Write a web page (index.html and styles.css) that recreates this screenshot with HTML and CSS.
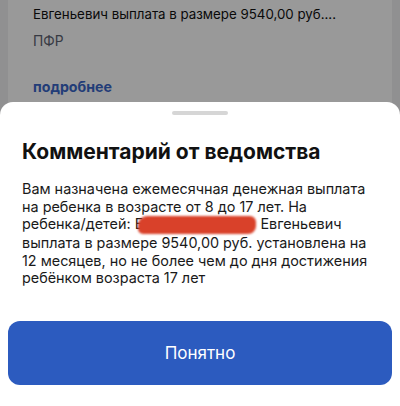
FILE: index.html
```html
<!DOCTYPE html>
<html lang="ru">
<head>
<meta charset="utf-8">
<link rel="stylesheet" href="styles.css">
</head>
<body>
<div class="screen">
  <div class="page">
    <div class="card">
      <p class="card-text">Евгеньевич выплата в размере 9540,00 руб....</p>
      <p class="card-source">ПФР</p>
      <a class="card-link">подробнее</a>
    </div>
  </div>
  <div class="overlay"></div>
  <div class="sheet">
    <div class="handle"></div>
    <h1 class="title">Комментарий от ведомства</h1>
    <p class="body">Вам назначена ежемесячная денежная выплата<br>на ребенка в возрасте от 8 до 17 лет. На<br>ребенка/детей: Е<span class="redact"></span> Евгеньевич<br>выплата в размере 9540,00 руб. установлена на<br>12 месяцев, но не более чем до дня достижения<br>ребёнком возраста 17 лет</p>
    <button class="btn">Понятно</button>
  </div>
</div>
</body>
</html>
```
FILE: styles.css
```css
html, body {
  margin: 0;
  padding: 0;
}
body {
  font-family: Inter, "Noto Sans", sans-serif;
  background: #f0f0f2;
}
.screen {
  position: relative;
  width: 400px;
  height: 406px;
  overflow: hidden;
}
.page {
  padding: 0 8px;
}
.card {
  background: #ffffff;
  padding: 4px 25px 20px;
  height: 120px;
}
.card-text {
  margin: 0;
  font-size: 13.3px;
  line-height: 20px;
  color: #111;
  white-space: nowrap;
}
.card-source {
  margin: 7px 0 0;
  font-size: 13.8px;
  line-height: 20px;
  color: #5c6270;
}
.card-link {
  display: block;
  margin-top: 26px;
  font-size: 14.2px;
  line-height: 20px;
  font-weight: 700;
  color: #3a66c8;
}
.overlay {
  position: absolute;
  inset: 0;
  background: rgba(0, 0, 0, 0.4);
}
.sheet {
  position: absolute;
  left: 0;
  right: 0;
  top: 102px;
  bottom: 0;
  background: #fff;
  border-radius: 13px 13px 0 0;
  padding: 9px 8px 0;
  display: flex;
  flex-direction: column;
}
.handle {
  align-self: center;
  width: 56px;
  height: 4px;
  border-radius: 2px;
  background: #d6d6d6;
}
.title {
  margin: 24px 14px 0;
  font-size: 21px;
  line-height: 26px;
  font-weight: 700;
  color: #111;
}
.body {
  margin: 15px 14px 0;
  font-size: 14.4px;
  line-height: 17.5px;
  color: #1a1a1a;
}
.redact {
  display: inline-block;
  width: 118px;
  height: 18px;
  margin-left: -5px;
  vertical-align: -5px;
  background: #d9412a;
  border-radius: 9px 6px 8px 5px;
  filter: blur(0.8px);
}
.btn {
  margin-top: 34px;
  height: 64px;
  border: 0;
  border-radius: 12px;
  background: #2c5bbf;
  color: #fff;
  font-family: Inter, "Noto Sans", sans-serif;
  font-size: 17px;
}
```
